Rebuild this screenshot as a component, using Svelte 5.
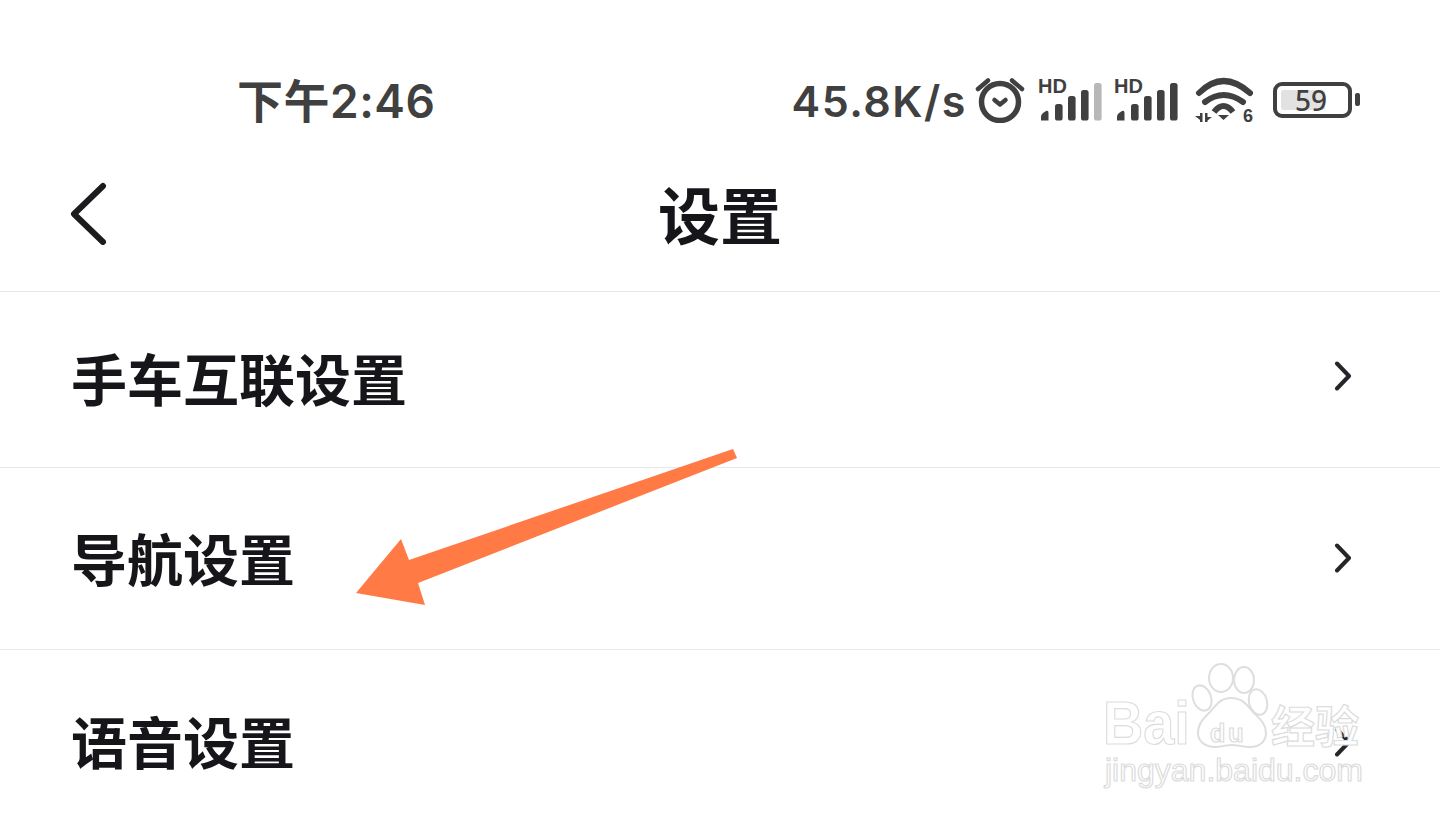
<script>
  const rows = [
    { label: '手车互联设置', cls: 'row row--first' },
    { label: '导航设置', cls: 'row row--second' },
    { label: '语音设置', cls: 'row row--third' }
  ];
  const bars = [
    { x: 14, y: 21, h: 16 },
    { x: 27, y: 13, h: 24 },
    { x: 40, y: 7, h: 30 }
  ];
</script>

<div class="screen">
  <div class="status">
    <span class="time">下午2:46</span>
    <div class="status__right">
      <span class="speed">45.8K/s</span>

      {#snippet signal(lastColor)}
        <div class="signal">
          <span class="hd">HD</span>
          <svg width="61" height="38" viewBox="0 0 61 38">
            <path d="M0 37.500v-4q0-2 2-3.500l3-2q2.500-1 2.500 2v7.500z" fill="#404040" />
            {#each bars as b}
              <rect x={b.x} y={b.y} width="7.600" height={b.h + 0.5} rx="2.600" fill="#404040" />
            {/each}
            <rect x="53" y="0" width="7.600" height="37.500" rx="2.600" fill={lastColor} />
          </svg>
        </div>
      {/snippet}

      <svg class="alarm" width="50" height="46" viewBox="0 0 50 46" fill="none" stroke="#404040">
        <circle cx="25" cy="25" r="18.500" stroke-width="5.500" />
        <path d="M19.500 23l5.500 4.500 5.500-4.500" stroke-width="4.500" stroke-linecap="round" stroke-linejoin="round" />
        <path d="M3 12L13 3.500M47 12L37 3.500" stroke-width="4.500" stroke-linecap="round" />
      </svg>
      {@render signal('#b8b8b8')}
      {@render signal('#404040')}
      <svg class="wifi" width="60" height="52" viewBox="0 0 60 52" fill="none" stroke="#404040">
        <path d="M5 17Q29-7 56 17" stroke-width="6" stroke-linecap="round" />
        <path d="M11 26Q29.500 12 49 26" stroke-width="6" stroke-linecap="round" />
        <path d="M20 36Q29.500 24 39 36" stroke-width="6" stroke-linecap="butt" />
        <path d="M24 39h11l-5.500 5z" fill="#404040" stroke="none" />
        <path d="M6 37h2.500v9H6v-2l-5-4h5zM11 46V37h2.500v4h4.500l-4.500 3.500V46z" fill="#404040" stroke="none" />
        <text x="49" y="46" class="wifi__six">6</text>
      </svg>
      <div class="battery">
        <div class="battery__body">
          <div class="battery__fill"></div>
          <span class="battery__num">59</span>
        </div>
        <div class="battery__nub"></div>
      </div>
    </div>
  </div>

  <header class="nav">
    <svg class="back" width="38" height="64" viewBox="0 0 38 64" fill="none">
      <path d="M33 5L4 33l29 28" stroke="#1c1c1e" stroke-width="6" stroke-linecap="round" stroke-linejoin="round" />
    </svg>
    <h1 class="title">设置</h1>
  </header>

  {#each rows as r}
    <div class={r.cls}>
      <span class="row__label">{r.label}</span>
      <svg class="chevron" width="18" height="30" viewBox="0 0 18 30" fill="none">
        <path d="M3 2.500l12 12.500-12 12.500" stroke="#26262a" stroke-width="4" stroke-linecap="round" stroke-linejoin="round" />
      </svg>
    </div>
  {/each}

  <!-- annotation drawn over the screenshot -->
  <svg class="arrow" width="1440" height="819" viewBox="0 0 1440 819">
    <polygon points="733,449 737,458 418,583 425,605 356,593 401,539 409,560" fill="#ff7a45" />
  </svg>

  <div class="mark">
    <svg class="mark__paw" width="270" height="110" viewBox="0 0 270 110" fill="none" stroke="#dedede" stroke-width="2">
      <ellipse cx="121" cy="18" rx="12" ry="14" />
      <ellipse cx="144" cy="20" rx="10" ry="13" />
      <ellipse cx="102" cy="38" rx="9" ry="13" transform="rotate(-20 102 38)" />
      <ellipse cx="158" cy="42" rx="9" ry="13" transform="rotate(-15 158 42)" />
      <path d="M131 38c-12 0-16 9-22 15-6 6-11 11-11 20 0 9 8 14 17 14 6 0 11-2 17-2s11 2 18 2c10 0 16-6 16-14 0-9-6-14-12-20-6-6-10-15-23-15z" fill="#fff" />
    </svg>
    <span class="mark__bai">Bai</span>
    <span class="mark__du">du</span>
    <span class="mark__jy">经验</span>
    <span class="mark__url">jingyan.baidu.com</span>
  </div>
</div>

<style>
  :global(body) {
    margin: 0;
    background: #fff;
  }
  .screen {
    position: relative;
    width: 1440px;
    height: 819px;
    overflow: hidden;
    background: #fff;
    font-family: "Noto Sans CJK SC", "Noto Sans", sans-serif;
  }

  .status {
    display: flex;
    align-items: center;
    justify-content: space-between;
    height: 66px;
    padding: 68px 80px 0 237px;
    color: #404040;
  }
  .time {
    font-family: Inter, "Noto Sans CJK SC", sans-serif;
    font-size: 46px;
    font-weight: 600;
    line-height: 66px;
    letter-spacing: 0.5px;
  }
  .status__right {
    display: flex;
    align-items: center;
  }
  .speed {
    font-family: Inter, sans-serif;
    font-size: 43px;
    font-weight: 600;
    letter-spacing: 1.500px;
    margin-right: 8px;
    line-height: 66px;
  }
  .alarm {
    margin-right: 13px;
    margin-top: -2px;
  }
  .signal {
    position: relative;
    width: 64px;
    height: 40px;
    margin-top: 2px;
    margin-right: 12px;
  }
  .signal svg {
    position: absolute;
    left: 3px;
    top: 1px;
  }
  .hd {
    position: absolute;
    left: 0;
    top: -6px;
    font-family: "Liberation Sans", sans-serif;
    font-size: 20px;
    font-weight: 700;
    line-height: 20px;
    color: #404040;
  }
  .wifi {
    margin-left: 4px;
    margin-right: 19px;
    margin-top: 2px;
  }
  .wifi__six {
    font-family: "Liberation Sans", sans-serif;
    font-size: 18px;
    font-weight: 700;
    fill: #404040;
    stroke: none;
  }
  .battery {
    display: flex;
    align-items: center;
    gap: 3px;
    margin-top: -3px;
  }
  .battery__body {
    position: relative;
    display: flex;
    align-items: center;
    justify-content: center;
    box-sizing: border-box;
    width: 79px;
    height: 36px;
    border: 4px solid #404040;
    border-radius: 9px;
    padding-right: 3px;
  }
  .battery__fill {
    position: absolute;
    left: 4px;
    top: 4px;
    bottom: 4px;
    width: 44px;
    background: #e2e2e2;
    border-radius: 3px;
  }
  .battery__num {
    position: relative;
    font-family: "Noto Sans", sans-serif;
    font-size: 28px;
    font-weight: 500;
    line-height: 28px;
    color: #404040;
  }
  .battery__nub {
    width: 5px;
    height: 13px;
    background: #404040;
    border-radius: 2px;
  }

  .nav {
    position: relative;
    display: flex;
    justify-content: center;
    align-items: center;
    box-sizing: border-box;
    height: 158px;
    padding-top: 1px;
    border-bottom: 1px solid #e8e8e8;
  }
  .back {
    position: absolute;
    left: 70px;
    top: 47px;
  }
  .title {
    margin: 0;
    font-size: 62px;
    font-weight: 700;
    line-height: 80px;
    color: #16161a;
  }

  .row {
    display: flex;
    align-items: center;
    justify-content: space-between;
    box-sizing: border-box;
    padding: 0 88px 0 72px;
    border-bottom: 1px solid #e8e8e8;
  }
  .row--first { height: 176px; padding-bottom: 3px; }
  .row--second { height: 182px; }
  .row--third { height: 190px; border-bottom: none; }
  .row__label {
    margin-left: -1px;
    margin-bottom: 3px;
    font-size: 56px;
    font-weight: 700;
    line-height: 76px;
    color: #16161a;
  }
  .row--third .row__label { margin-bottom: 10px; }
  .chevron { margin-bottom: 2px; }
  .row--first .chevron { margin-bottom: 5px; }
  .row--third .chevron { margin-bottom: 7px; }

  .arrow {
    position: absolute;
    left: 0;
    top: 0;
    pointer-events: none;
  }

  .mark {
    position: absolute;
    left: 1100px;
    top: 660px;
    width: 270px;
    height: 135px;
    color: #fff;
    -webkit-text-stroke: 1.200px #dcdcdc;
    font-family: "Liberation Sans", sans-serif;
  }
  .mark span {
    position: absolute;
    white-space: nowrap;
  }
  .mark__paw {
    position: absolute;
    left: 0;
    top: 0;
  }
  .mark__bai {
    left: 3px;
    top: 30px;
    font-size: 62px;
    line-height: 66px;
    font-weight: 700;
    transform: scaleX(0.9);
    transform-origin: left center;
  }
  .mark__du {
    left: 110px;
    top: 60px;
    font-size: 25px;
    line-height: 26px;
    font-weight: 700;
    letter-spacing: 3px;
  }
  .mark__jy {
    left: 171px;
    top: 36px;
    font-family: "Noto Sans CJK SC", sans-serif;
    font-size: 44px;
    line-height: 56px;
    font-weight: 700;
  }
  .mark__url {
    left: 5px;
    top: 92px;
    font-size: 32px;
    line-height: 36px;
  }
</style>
